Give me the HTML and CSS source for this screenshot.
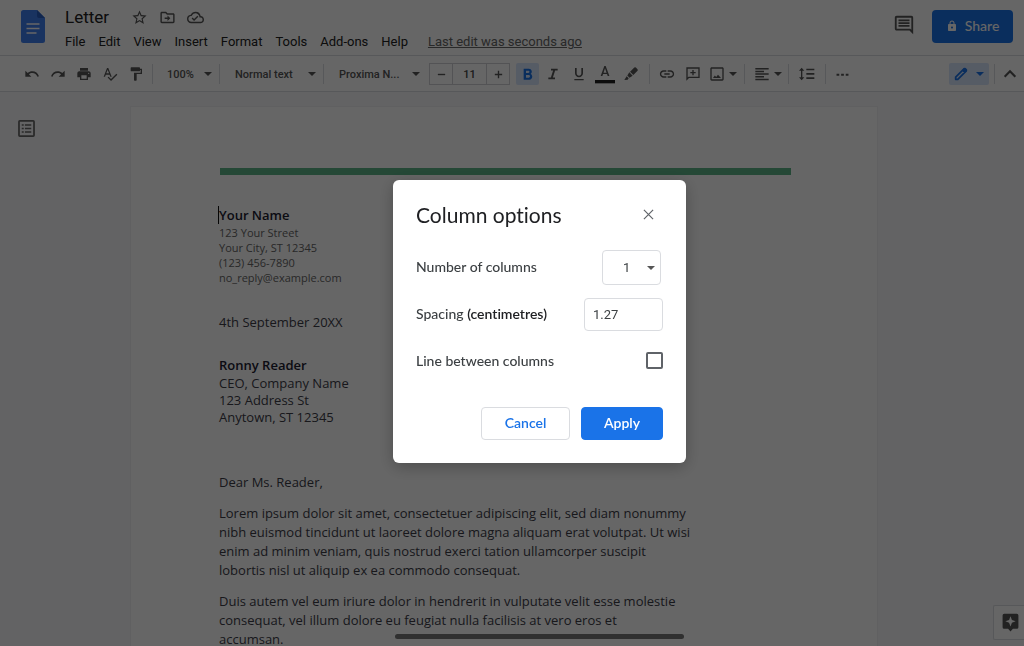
FILE: index.html
```html
<!DOCTYPE html>
<html lang="en">
<head>
<meta charset="utf-8">
<title>Letter</title>
<link rel="stylesheet" href="styles.css">
</head>
<body>
<div class="app">
  <header class="header">
    <svg class="logo" viewBox="0 0 24 33"><path d="M2.500 0H16l8 8v22.500a2.500 2.500 0 0 1-2.500 2.500h-19A2.500 2.500 0 0 1 0 30.500v-28A2.500 2.500 0 0 1 2.500 0z" fill="#3f7ff0"/><path d="M16 0l8 8h-6a2 2 0 0 1-2-2z" fill="#2a5fc4"/><path d="M5.500 14h13M5.500 18.500h13M5.500 23h10" stroke="#fff" stroke-width="1.700"/></svg>
    <div class="titles">
      <div class="title-row">
        <h1 class="title">Letter</h1>
        <button class="mini" aria-label="Star"><svg viewBox="0 0 24 24"><path d="M22 9.240l-7.190-.620L12 2 9.190 8.630 2 9.240l5.460 4.730L5.820 21 12 17.270 18.180 21l-1.630-7.030L22 9.240zM12 15.400l-3.760 2.270 1-4.280-3.320-2.880 4.380-.380L12 6.100l1.710 4.040 4.380.380-3.320 2.880 1 4.280L12 15.400z"/></svg></button>
        <button class="mini" aria-label="Move"><svg viewBox="0 0 24 24"><path d="M20 6h-8l-2-2H4c-1.100 0-2 .900-2 2v12c0 1.100.900 2 2 2h16c1.100 0 2-.900 2-2V8c0-1.100-.900-2-2-2zm0 12H4V6h5.200l2 2H20v10zm-8-1l4-4-4-4v3H8v2h4v3z"/></svg></button>
        <button class="mini" aria-label="Saved to Drive"><svg viewBox="0 0 24 24"><path d="M19.350 10.040A7.490 7.490 0 0 0 12 4C9.110 4 6.600 5.640 5.350 8.040A5.994 5.994 0 0 0 0 14c0 3.310 2.690 6 6 6h13c2.760 0 5-2.240 5-5 0-2.640-2.050-4.780-4.650-4.960zM19 18H6c-2.210 0-4-1.790-4-4 0-2.050 1.530-3.760 3.560-3.970l1.070-.110.500-.950A5.469 5.469 0 0 1 12 6c2.620 0 4.880 1.860 5.390 4.430l.300 1.500 1.530.110A2.980 2.980 0 0 1 22 15c0 1.650-1.350 3-3 3zm-9-3.820l-2.090-2.090L6.500 13.500 10 17l6.010-6.010-1.410-1.410z"/></svg></button>
      </div>
      <nav class="menus">
        <button>File</button><button>Edit</button><button>View</button><button>Insert</button><button>Format</button><button>Tools</button><button>Add-ons</button><button>Help</button>
        <a class="last-edit" href="#">Last edit was seconds ago</a>
      </nav>
    </div>
    <button class="comments" aria-label="Open comment history"><svg viewBox="0 0 24 24"><path d="M21.990 4c0-1.100-.890-2-1.990-2H4c-1.100 0-2 .900-2 2v12c0 1.100.900 2 2 2h14l4 4-.010-18zM20 4v13.170L18.830 16H4V4h16zM6 12h12v2H6zm0-3h12v2H6zm0-3h12v2H6z"/></svg></button>
    <button class="share"><svg viewBox="0 0 24 24"><path d="M18 8h-1V6c0-2.760-2.240-5-5-5S7 3.240 7 6v2H6c-1.100 0-2 .900-2 2v10c0 1.100.900 2 2 2h12c1.100 0 2-.900 2-2V10c0-1.100-.900-2-2-2zm-6 9c-1.100 0-2-.900-2-2s.900-2 2-2 2 .900 2 2-.900 2-2 2zm3-9H9V6a3 3 0 0 1 6 0v2z"/></svg>Share</button>
  </header>

  <div class="toolbar" role="toolbar" aria-label="Formatting">
    <div class="group group-first">
      <button class="tool" aria-label="Undo"><svg viewBox="0 0 24 24"><path d="M12.500 8c-2.650 0-5.050.990-6.900 2.600L2 7v9h9l-3.620-3.620c1.390-1.160 3.160-1.880 5.120-1.880 3.540 0 6.550 2.310 7.600 5.500l2.370-.780C21.080 11.030 17.150 8 12.500 8z"/></svg></button>
      <button class="tool" aria-label="Redo"><svg viewBox="0 0 24 24"><path d="M18.400 10.600C16.550 8.990 14.150 8 11.500 8c-4.650 0-8.580 3.030-9.960 7.220L3.900 16a8.002 8.002 0 0 1 7.600-5.500c1.950 0 3.730.720 5.120 1.880L13 16h9V7l-3.600 3.600z"/></svg></button>
      <button class="tool" aria-label="Print"><svg viewBox="0 0 24 24"><path d="M19 8H5c-1.660 0-3 1.340-3 3v6h4v4h12v-4h4v-6c0-1.660-1.340-3-3-3zm-3 11H8v-5h8v5zm3-7c-.550 0-1-.450-1-1s.450-1 1-1 1 .450 1 1-.450 1-1 1zm-1-9H6v4h12V3z"/></svg></button>
      <button class="tool" aria-label="Spelling check"><svg viewBox="0 0 24 24"><path d="M12.450 16h2.090L9.430 3H7.570L2.460 16h2.090l1.120-3h5.640l1.140 3zm-6.020-5L8.500 5.480 10.570 11H6.430zm15.160.590l-8.090 8.090L9.830 16l-1.410 1.410 5.090 5.090L23 13l-1.410-1.410z"/></svg></button>
      <button class="tool" aria-label="Paint format"><svg viewBox="0 0 24 24"><path d="M18 4V3c0-.550-.450-1-1-1H5c-.550 0-1 .450-1 1v4c0 .550.450 1 1 1h12c.550 0 1-.450 1-1V6h1v4H9v11c0 .550.450 1 1 1h2c.550 0 1-.450 1-1v-9h8V4h-3z"/></svg></button>
    </div>
    <button class="group drop drop-zoom">100%<i class="caret"></i></button>
    <button class="group drop drop-style">Normal text<i class="caret"></i></button>
    <button class="group drop drop-font">Proxima N...<i class="caret"></i></button>
    <div class="stepper">
      <button aria-label="Decrease font size"><svg viewBox="0 0 24 24"><path d="M4 10.500h16v3H4z"/></svg></button>
      <input value="11" aria-label="Font size">
      <button aria-label="Increase font size"><svg viewBox="0 0 24 24"><path d="M4 10.500h6.500V4h3v6.500H20v3h-6.500V20h-3v-6.500H4z"/></svg></button>
    </div>
    <div class="group text-tools">
      <button class="tool active" aria-label="Bold"><svg viewBox="0 0 24 24"><path d="M15.900 11.600c1-.700 1.800-1.900 1.800-3.100C17.700 5.900 15.800 4 13.200 4H5.500v16.500h8.700c2.300 0 4.200-1.900 4.200-4.300 0-1.800-1-3.600-2.500-4.600zM9 7h3.500c.900 0 1.700.800 1.700 1.700s-.800 1.700-1.700 1.700H9V7zm4 10.500H9v-4h4c1.100 0 2 .900 2 2s-.900 2-2 2z"/></svg></button>
      <button class="tool" aria-label="Italic"><svg viewBox="0 0 24 24"><path d="M9 4v2.800h3.210l-3.420 10.400H5V20h10v-2.800h-3.210l3.420-10.400H19V4z"/></svg></button>
      <button class="tool" aria-label="Underline"><svg viewBox="0 0 24 24"><path d="M12 17c3.310 0 6-2.690 6-6V3h-2.500v8c0 1.930-1.570 3.500-3.500 3.500S8.500 12.930 8.500 11V3H6v8c0 3.310 2.690 6 6 6zm-7 2.500v2h14v-2H5z"/></svg></button>
      <button class="tool colour" aria-label="Text colour"><svg viewBox="0 0 30 30"><path d="M14 3L8.500 18h2.500l1.100-3h5.900l1.100 3h2.500L16 3h-2zm-1.200 10L15 6.500l2.300 6.500z"/><path d="M0 24h30v5H0z" fill="#222"/></svg></button>
      <button class="tool" aria-label="Highlight colour"><svg viewBox="0 0 24 24"><path d="M2 21l3.500-5.500 3 3L7 20.500zM6.500 14.300l3-4.800 5 5-4.800 3.200zM10.600 8.500L17 2.200q1.200-1 2.300.100l2.400 2.400q1.100 1.100.100 2.300L15.500 13.400z"/></svg></button>
    </div>
    <div class="group insert-tools">
      <button class="tool" aria-label="Insert link"><svg viewBox="0 0 24 24"><path d="M3.400 12c0-1.900 1.600-3.300 3.600-3.300h4V6.500H7c-3.200 0-5.700 2.400-5.700 5.500S3.800 17.500 7 17.500h4v-2.200H7c-2 0-3.600-1.400-3.600-3.300zM8 13.100h8v-2.200H8v2.200zm9-6.600h-4v2.200h4c2 0 3.600 1.400 3.600 3.300s-1.600 3.300-3.600 3.300h-4v2.200h4c3.200 0 5.700-2.400 5.700-5.500S20.200 6.500 17 6.500z"/></svg></button>
      <button class="tool" aria-label="Add comment"><svg viewBox="0 0 24 24"><path d="M22 2H2v20l4-4h16V2zm-2 14H5.200L4 17.200V4h16v12zM11 14h2v-3h3V9h-3V6h-2v3H8v2h3z"/></svg></button>
      <button class="tool with-caret" aria-label="Insert image"><svg viewBox="0 0 24 24"><path d="M20 4v16H4V4h16m0-2H4c-1.100 0-2 .900-2 2v16c0 1.100.900 2 2 2h16c1.100 0 2-.900 2-2V4c0-1.100-.900-2-2-2zm-6.500 11l-2.700 3.500-2-2.300L6 18h12z"/></svg><i class="caret"></i></button>
    </div>
    <div class="group align-tools"><button class="tool with-caret" aria-label="Align"><svg viewBox="0 0 24 24"><path d="M15 15H2v2.200h13V15zm0-8H2v2.200h13V7zM2 13.200h20V11H2v2.200zm0 8h20V19H2v2.200zM2 3v2.200h20V3H2z"/></svg><i class="caret"></i></button></div>
    <div class="group line-tools"><button class="tool" aria-label="Line spacing"><svg viewBox="0 0 24 24"><path d="M5 7h3L4 2.500 0 7h3v10H0l4 4.500L8 17H5V7zm6-3v2.500h12V4H11zm0 15.500h12V17H11v2.500zm0-6.500h12v-2.500H11V13z"/></svg></button></div>
    <button class="tool" aria-label="More"><svg viewBox="0 0 24 24"><path d="M1 10.500h5v4H1zM9.500 10.500h5v4h-5zM18 10.500h5v4h-5z"/></svg></button>
    <button class="mode" aria-label="Editing mode"><svg viewBox="0 0 24 24"><path d="M4 20v-3.200L16.800 4l3.200 3.200L7.200 20zM14.500 6.300l3.200 3.200" fill="none" stroke="#1a73e8" stroke-width="2.600" stroke-linejoin="round"/><path d="M14 6l3-3q1-.800 2 0l2 2q.800 1 0 2l-3 3z"/></svg><i class="caret"></i></button>
    <button class="tool collapse" aria-label="Hide the menus"><svg viewBox="0 0 24 24"><path d="M4 16l8-8 8 8" fill="none" stroke="#555" stroke-width="3.200"/></svg></button>
  </div>

  <main class="canvas">
    <aside class="side"><button class="outline" aria-label="Show document outline"><svg viewBox="0 0 24 24"><path d="M3.500 2.500h17a1 1 0 0 1 1 1v17a1 1 0 0 1-1 1h-17a1 1 0 0 1-1-1v-17a1 1 0 0 1 1-1z" fill="none" stroke="#666" stroke-width="2.200"/><path d="M6 6.500h2.500v2H6zM10 6.500h8v2h-8zM6 11h2.500v2H6zM10 11h8v2h-8zM6 15.500h2.500v2H6zM10 15.500h8v2h-8z"/></svg></button></aside>
    <article class="page">
      <div class="rule"></div>
      <p class="name cursor">Your Name</p>
      <p class="address">123 Your Street<br>Your City, ST 12345<br>(123) 456-7890<br>no_reply@example.com</p>
      <p class="date">4th September 20XX</p>
      <p class="name">Ronny Reader</p>
      <p class="recipient">CEO, Company Name<br>123 Address St<br>Anytown, ST 12345</p>
      <p class="para">Dear Ms. Reader,</p>
      <p class="para">Lorem ipsum dolor sit amet, consectetuer adipiscing elit, sed diam nonummy<br>nibh euismod tincidunt ut laoreet dolore magna aliquam erat volutpat. Ut wisi<br>enim ad minim veniam, quis nostrud exerci tation ullamcorper suscipit<br>lobortis nisl ut aliquip ex ea commodo consequat.</p>
      <p class="para">Duis autem vel eum iriure dolor in hendrerit in vulputate velit esse molestie<br>consequat, vel illum dolore eu feugiat nulla facilisis at vero eros et<br>accumsan.</p>
    </article>
  </main>
  <button class="explore" aria-label="Explore"><svg viewBox="0 0 24 24"><path d="M4 1h16a2 2 0 0 1 2 2v15a2 2 0 0 1-2 2h-5l-3 3.500L9 20H4a2 2 0 0 1-2-2V3a2 2 0 0 1 2-2zm8 3l-1.800 4.700L5.500 10.500l4.700 1.800L12 17l1.800-4.700 4.700-1.800-4.700-1.800z" fill-rule="evenodd"/></svg></button>
</div>
<div class="scrim">
  <form class="dialog" role="dialog" aria-labelledby="dialog-title">
    <div class="dialog-head">
      <h2 id="dialog-title">Column options</h2>
      <button type="button" class="close" aria-label="Close"><svg viewBox="0 0 12 12"><path d="M1 1l10 10M11 1L1 11" stroke="#5f6368" stroke-width="1.300"/></svg></button>
    </div>
    <div class="row"><label for="cols">Number of columns</label><span class="select"><select id="cols"><option>1</option><option>2</option><option>3</option></select><i class="caret"></i></span></div>
    <div class="row"><label for="space">Spacing <b>(centimetres)</b></label><input class="field" id="space" value="1.27"></div>
    <div class="row"><label for="line">Line between columns</label><input class="check" id="line" type="checkbox"></div>
    <div class="actions"><button type="button" class="btn">Cancel</button><button type="button" class="btn primary">Apply</button></div>
  </form>
</div>
<div class="home-bar"></div>
</body>
</html>
```
FILE: styles.css
```css
* { box-sizing: border-box; }
body { margin: 0; font-family: Roboto, sans-serif; font-size: 13px; color: #333; overflow: hidden; font-variant-ligatures: none; }
button { border: 0; background: none; padding: 0; margin: 0; font: inherit; font-variant-ligatures: none; color: inherit; }
h1, h2, p { margin: 0; }
svg { display: block; fill: currentColor; }

.app { display: flex; flex-direction: column; height: 100vh; background: #fff; }
.header { display: flex; flex: none; height: 56px; padding: 0 11px 0 21px; align-items: flex-start; border-bottom: 1px solid #dadce0; }
.logo { width: 24px; height: 33px; margin-top: 10px; }
.titles { flex: 1; margin-left: 20px; padding-top: 7px; }
.title-row { display: flex; align-items: center; height: 20px; }
.title { font-size: 17px; font-weight: 400; color: #222; margin-right: 22px; }
.mini { width: 18px; margin-right: 10px; color: #555; }
.mini svg { width: 17px; height: 17px; }
.menus { display: flex; gap: 13px; margin-top: 6px; line-height: 17px; color: #222; white-space: nowrap; }
.last-edit { margin-left: 7px; color: #666; }
.comments { width: 22px; margin: 14px 17px 0 0; color: #555; }
.comments svg { width: 22px; height: 22px; }
.share { display: flex; align-items: center; justify-content: center; gap: 7px; width: 81px; height: 33px; margin-top: 10px; padding-bottom: 2px; border-radius: 4px; background: #1a73e8; color: #fff; font: 500 14px Lato, sans-serif; }
.share svg { width: 12px; height: 12px; }

.toolbar { display: flex; flex: none; align-items: center; height: 36px; padding: 1px 0 0 19px; border-bottom: 1px solid #dadce0; color: #555; }
.group { display: flex; align-items: center; height: 20px; border-right: 1px solid #dadce0; }
.tool { display: flex; align-items: center; justify-content: center; width: 26px; height: 22px; }
.tool svg, .mode svg { width: 16px; height: 16px; flex: none; }
.group-first { width: 134px; }
.caret { flex: none; width: 0; height: 0; border: 4px solid transparent; border-top-color: currentColor; border-bottom: 0; }
.drop { justify-content: space-between; font-size: 11px; font-weight: 500; padding: 0 7px 0 14px; white-space: nowrap; }
.drop-zoom { width: 67px; }
.drop-style { width: 104px; padding-left: 15px; }
.drop-font { width: 105px; padding-left: 15px; padding-right: 9px; border-right: 0; }
.stepper { display: flex; width: 81px; height: 22px; border: 1px solid #d0d0d4; }
.stepper button { display: flex; width: 22px; align-items: center; justify-content: center; }
.stepper svg { width: 11px; height: 11px; }
.stepper input { flex: 1; min-width: 0; padding: 0; border: 1px solid #d0d0d4; border-width: 0 1px; background: none; text-align: center; font: 500 11px Roboto, sans-serif; color: #444; }
.text-tools { width: 140px; padding-left: 4px; }
.text-tools .active { width: 23px; margin: 0 1px 0 2px; border-radius: 2px; background: #d8e5fc; color: #1a73e8; }
.tool.colour svg { width: 20px; height: 20px; }
.insert-tools { width: 95px; padding-left: 4px; }
.with-caret { gap: 4px; width: 38px; }
.insert-tools .with-caret { width: 34px; }
.align-tools { width: 44px; padding-left: 4px; }
.line-tools { width: 37px; padding-left: 5px; }
.line-tools + .tool { margin-left: 3px; }
.line-tools + .tool svg { width: 13px; height: 13px; }
.mode { display: flex; align-items: center; gap: 7px; height: 22px; margin-left: auto; padding: 0 5px 0 4px; border-radius: 2px; background: #d8e5fc; color: #1a73e8; }
.collapse { width: 30px; height: 20px; margin-left: 5px; border-left: 1px solid #dadce0; }
.collapse svg { width: 16px; height: 16px; }

.canvas { display: grid; grid-template-columns: 130px minmax(0, 1fr) 146px; flex: 1; min-height: 0; padding-top: 14px; background: #f8f8fb; }
.side { padding: 13px 17px; }
.outline { color: #666; }
.outline svg { width: 19px; height: 19px; }
.page { padding: 61px 86px 0 88px; border: 1px solid #f0f0f2; border-bottom: 0; background: #fff; overflow: hidden; font: 13px/19px "Open Sans", sans-serif; color: #3c3c48; white-space: nowrap; }
.rule { height: 7px; margin: 0 0 31px 1px; background: #5cb488; }
.name { font-weight: 600; color: #202030; line-height: 18px; }
.cursor { box-shadow: -1px 0 #111; }
.address { font-size: 11px; line-height: 15px; color: #666; margin: 1px 0 28px; }
.date { margin-bottom: 24px; }
.recipient { line-height: 17px; margin: 1px 0 47px; }
.para { margin-bottom: 12px; }
.explore { position: absolute; right: 0; bottom: 6px; width: 31px; height: 35px; padding-left: 7px; border: 1px solid #dadce0; border-right: 0; border-radius: 2px 0 0 2px; background: #fff; color: #555; }
.explore svg { width: 19px; height: 19px; }

.scrim { position: fixed; inset: 0; display: flex; align-items: center; justify-content: center; padding: 0 0 3px 55px; background: rgba(0, 0, 0, 0.6); }
.dialog { width: 293px; padding: 22px 23px 23px; border-radius: 6px; background: #fff; box-shadow: 0 4px 16px rgba(0, 0, 0, 0.25); font-family: Lato, sans-serif; color: #3c4043; }
.dialog-head { display: flex; justify-content: space-between; align-items: center; height: 24px; margin-bottom: 24px; padding-right: 9px; }
.dialog-head h2 { font-size: 21px; font-weight: 400; color: #202124; }
.close svg { width: 11px; height: 11px; }
.row { display: flex; align-items: center; justify-content: space-between; height: 35px; margin-bottom: 12px; font-size: 14px; font-weight: 500; }
.row label { padding-bottom: 2px; }
.row b { font-weight: 600; color: #202124; }
.select { position: relative; margin-right: 2px; }
.select select { width: 59px; height: 35px; padding: 0 0 0 20px; appearance: none; border: 1px solid #dadce0; border-radius: 4px; background: #fff; font: 13px Roboto, sans-serif; color: #3c4043; }
.select .caret { position: absolute; right: 6px; top: 16px; color: #555; }
.field { width: 79px; height: 33px; padding: 0 8px; border: 1px solid #dadce0; border-radius: 4px; font: 13px Roboto, sans-serif; color: #3c4043; }
.check { appearance: none; width: 17px; height: 17px; margin: 0 0 2px; border: 2px solid #5f6368; border-radius: 2px; }
.actions { display: flex; justify-content: flex-end; gap: 11px; margin-top: 28px; }
.btn { width: 89px; height: 33px; padding-bottom: 2px; border: 1px solid #dadce0; border-radius: 4px; font-size: 14px; font-weight: 600; color: #1a73e8; }
.btn.primary { width: 82px; border-color: #1a73e8; background: #1a73e8; color: #fff; }
.home-bar { position: fixed; left: 395px; bottom: 7px; width: 289px; height: 5px; border-radius: 3px; background: #303030; }
```
